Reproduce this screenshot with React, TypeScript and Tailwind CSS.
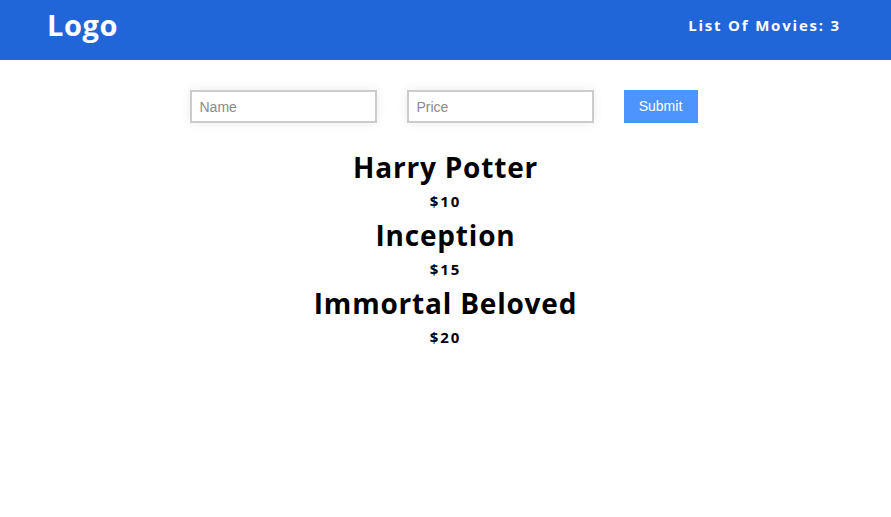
import { useState } from "react";

type Movie = { name: string; price: number };

export default function App() {
    const [movies] = useState<Movie[]>([
        { name: "Harry Potter", price: 10 },
        { name: "Inception", price: 15 },
        { name: "Immortal Beloved", price: 20 },
    ]);

    return (
        <div className="min-h-[517px] bg-white font-['Open_Sans',sans-serif]">
            {/* Nav */}
            <nav className="h-[60px] bg-[#2166d9] flex items-center justify-between pl-[47px] pr-[50px] text-white">
                <h1 className="text-[29px] font-bold tracking-[0.6px] -mt-[11px]">Logo</h1>
                <span className="text-[15px] font-bold tracking-[1.8px] -mt-[10px]">List Of Movies: {movies.length}</span>
            </nav>

            {/* Form */}
            <form className="flex justify-center gap-[30px] mt-[30px] pr-[4px]" onSubmit={(e) => e.preventDefault()}>
                <input
                    placeholder="Name"
                    className="w-[187px] h-[33px] border-2 border-[#ccc] px-2 text-[14px] font-['Liberation_Sans',sans-serif] shadow-[0_0_10px_rgba(0,0,0,0.08)] placeholder:text-[#8a8a8a] outline-none"
                />
                <input
                    placeholder="Price"
                    className="w-[187px] h-[33px] border-2 border-[#ccc] px-2 text-[14px] font-['Liberation_Sans',sans-serif] shadow-[0_0_10px_rgba(0,0,0,0.08)] placeholder:text-[#8a8a8a] outline-none"
                />
                <button className="w-[74px] h-[33px] bg-[#4d94ff] text-white text-[14px] font-['Liberation_Sans',sans-serif]">
                    Submit
                </button>
            </form>

            {/* Movies */}
            <div className="flex flex-col items-center mt-[24px]">
                {movies.map((m) => (
                    <div key={m.name} className="flex flex-col items-center">
                        <h2 className="text-[28px] font-bold tracking-[0.8px] leading-[40px]">{m.name}</h2>
                        <p className="text-[15px] font-bold tracking-[2px] leading-[28px]">${m.price}</p>
                    </div>
                ))}
            </div>
        </div>
    );
}
